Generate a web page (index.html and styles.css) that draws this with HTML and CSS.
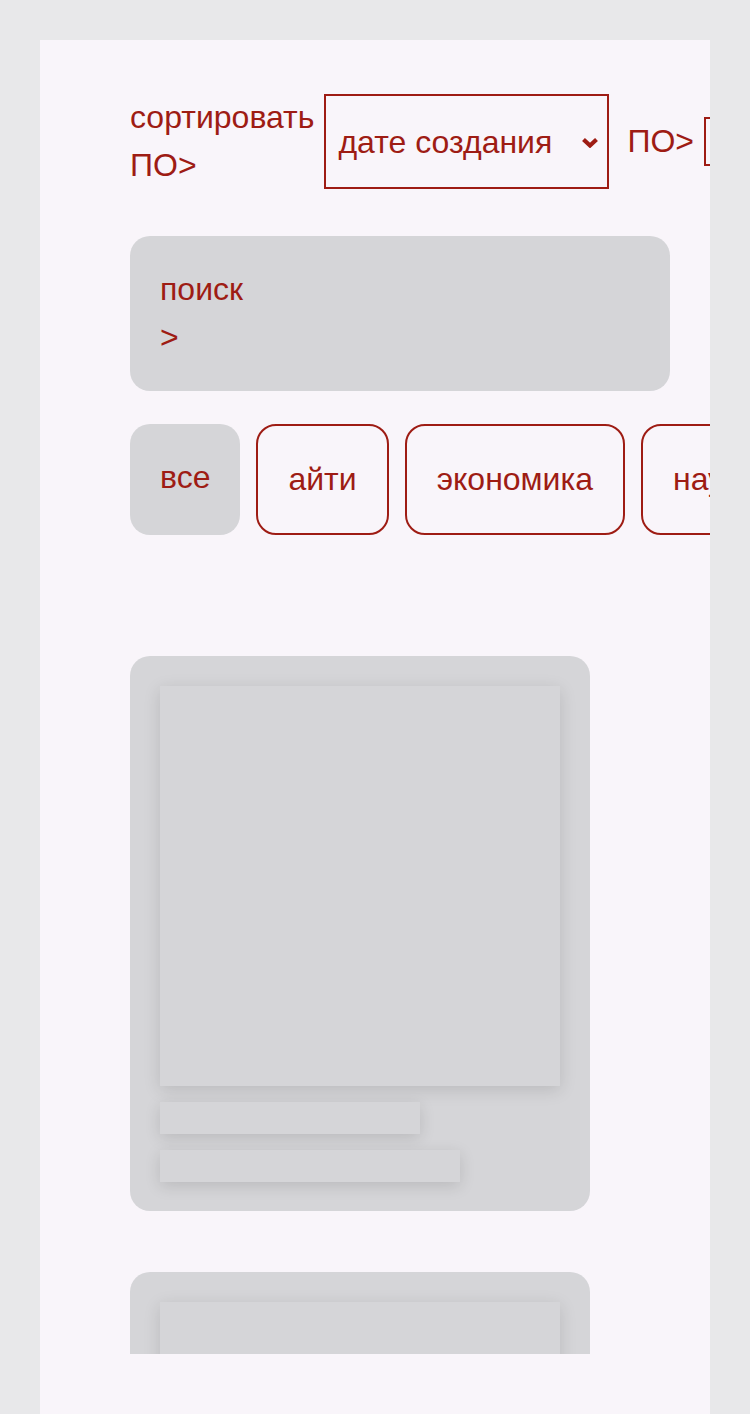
FILE: index.html
```html
<!DOCTYPE html>
<html lang="ru">
<head>
<meta charset="utf-8">
<title>Лента</title>
<link rel="stylesheet" href="styles.css">
</head>
<body>
<main class="page">
  <div class="sort-row">
    <label class="sort-label">сортировать ПО&gt;</label>
    <span class="select-wrap">
      <select class="sort-select">
        <option>дате создания</option>
      </select>
      <svg class="chevron" width="18" height="11" viewBox="0 0 18 11" aria-hidden="true">
        <polyline points="2.5,2.5 9,8.5 15.5,2.5" fill="none" stroke="#9e1c14" stroke-width="4.2" stroke-linecap="butt" stroke-linejoin="miter"/>
      </svg>
    </span>
    <span class="sort-label single">ПО&gt;</span>
    <span class="select-wrap">
      <select class="sort-select small">
        <option>убыванию</option>
      </select>
    </span>
  </div>

  <div class="search">
    <div class="search-line">поиск</div>
    <div class="search-line">&gt;</div>
  </div>

  <div class="chips">
    <button class="chip active">все</button>
    <button class="chip">айти</button>
    <button class="chip">экономика</button>
    <button class="chip">наука</button>
    <button class="chip">спорт</button>
  </div>

  <div class="feed">
    <article class="card">
      <div class="card-image"></div>
      <div class="card-line short"></div>
      <div class="card-line long"></div>
    </article>
    <article class="card">
      <div class="card-image"></div>
      <div class="card-line short"></div>
      <div class="card-line long"></div>
    </article>
  </div>
</main>
</body>
</html>
```

FILE: styles.css
```css
* { box-sizing: border-box; }

html, body {
  margin: 0;
  height: 100%;
}

body {
  background: #e8e8ea;
  padding: 40px 40px 0 40px;
  font-family: "Liberation Sans", Arial, sans-serif;
  color: #9e1c14;
}

.page {
  background: #f9f5fa;
  height: calc(100vh - 40px);
  padding: 54px 40px 60px 90px;
  overflow: hidden;
  display: flex;
  flex-direction: column;
}

.sort-row {
  display: flex;
  align-items: center;
  gap: 10px;
  flex-shrink: 0;
  font-size: 32px;
  line-height: 47.5px;
}

.sort-label {
  flex: 0 0 auto;
  width: min-content;
}

.sort-label.single {
  width: auto;
  margin-left: 8px;
  white-space: nowrap;
}

.select-wrap {
  position: relative;
  flex-shrink: 0;
  display: flex;
}

.sort-select {
  appearance: none;
  -webkit-appearance: none;
  height: 95px;
  width: 285px;
  border: 2px solid #9e1c14;
  border-radius: 0;
  background: transparent;
  color: #9e1c14;
  font-family: inherit;
  font-size: 32px;
  padding: 0 40px 0 12px;
  margin: 0;
}

.sort-select.small {
  height: 49px;
  width: 200px;
  font-size: 28px;
}

.chevron {
  position: absolute;
  right: 10px;
  top: 43px;
  pointer-events: none;
}

.search {
  flex-shrink: 0;
  margin-top: 47px;
  background: #d5d5d8;
  border-radius: 20px;
  padding: 30px;
  font-size: 32px;
  line-height: 47.5px;
}

.chips {
  flex-shrink: 0;
  margin-top: 33px;
  display: flex;
  gap: 16px;
}

.chip {
  flex-shrink: 0;
  font-family: inherit;
  font-size: 32px;
  line-height: 47px;
  color: #9e1c14;
  background: transparent;
  border: 2px solid #9e1c14;
  border-radius: 20px;
  padding: 30px;
  margin: 0;
}

.chip.active {
  background: #d5d5d8;
  border: none;
  align-self: stretch;
  padding: 28px 30px 32px;
}

.feed {
  flex: 1;
  min-height: 0;
  overflow: hidden;
  margin-top: 121px;
  display: flex;
  flex-direction: column;
  gap: 61px;
}

.card {
  flex-shrink: 0;
  width: 460px;
  background: #d5d5d8;
  border-radius: 20px;
  padding: 30px 30px 29px;
  display: flex;
  flex-direction: column;
  gap: 16px;
}

.card-image,
.card-line {
  background: #d5d5d8;
  box-shadow: 0 4px 16px rgba(0, 0, 0, 0.13);
}

.card-image {
  width: 400px;
  height: 400px;
}

.card-line {
  height: 32px;
}

.card-line.short { width: 260px; }
.card-line.long { width: 300px; }
```
